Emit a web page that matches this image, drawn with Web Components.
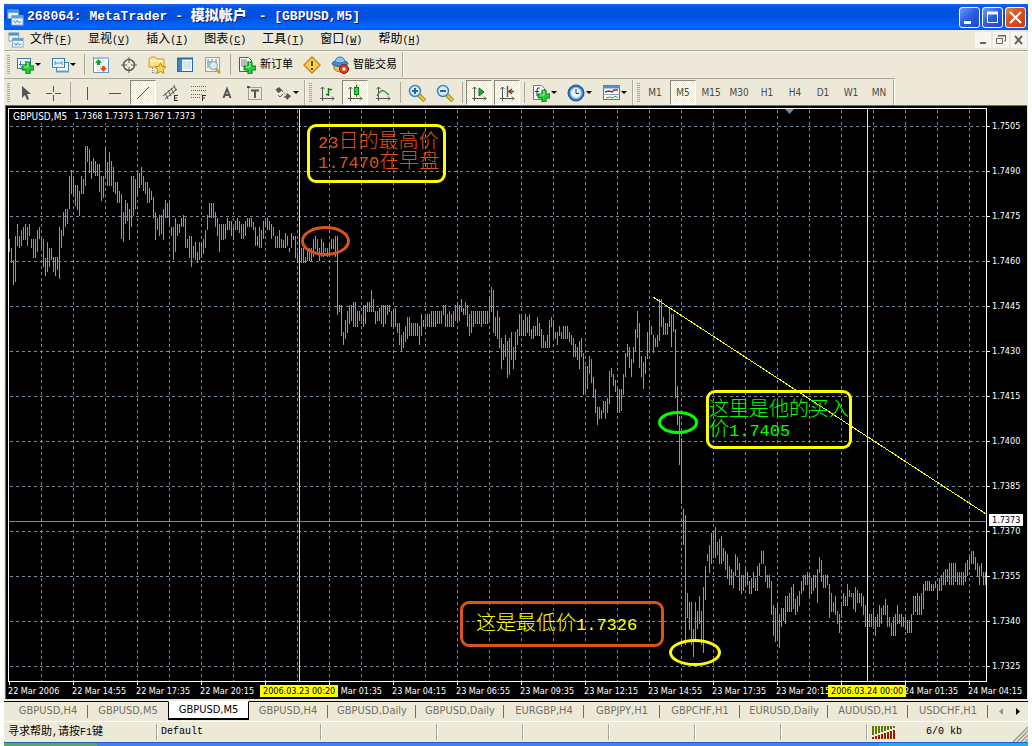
<!DOCTYPE html>
<html lang="zh-CN">
<head>
<meta charset="utf-8">
<title>268064: MetaTrader - 模拟帐户 - [GBPUSD,M5]</title>
<style>
  html, body { margin: 0; background: #fff; }
  body { font-family: "DejaVu Sans Condensed", "Noto Sans CJK SC", sans-serif; }
</style>
</head>
<body>
<mt-app></mt-app>
<script>
const CJK = '"Liberation Mono", "Noto Sans CJK SC", monospace';

const plus = (x, y) => `<path d="M${x + 4} ${y}h4v4h4v4h-4v4h-4v-4h-4v-4h4z" fill="#1fd13a" stroke="#067a14"/><path d="M${x + 5} ${y + 1}h1v4h-4" fill="none" stroke="#9df5a6"/>`;
const axes = '<path d="M4.500 17V3M2.500 5l2-2 2 2M2 14.500h14M14 12.500l2 2-2 2" fill="none" stroke="#555"/>';
const lens = sign => `<path d="M11 11l6 6" stroke="#a67c12" stroke-width="4"/><path d="M11 11l6 6" stroke="#f2cf4a" stroke-width="2"/><circle cx="7" cy="7" r="5.500" fill="#d5ecfb" stroke="#3c88bd" stroke-width="1.500"/><path d="${sign}" stroke="#1c69a5" stroke-width="2"/>`;

const ICONS = {
  app: '<rect x="1" y="1" width="11" height="9" fill="#eaf3fb" stroke="#7fa9cc"/><rect x="1" y="1" width="11" height="3" fill="#4d94cc"/><rect x="5" y="7" width="12" height="10" fill="#f6faff" stroke="#7fa9cc"/><rect x="5" y="7" width="12" height="3" fill="#5ba1d6"/><path d="M7 12l2 3 2-3 2 3 2-2" fill="none" stroke="#3978ad"/>',
  newchart: '<rect x="1.500" y="2.500" width="13" height="10" fill="#eef6fd" stroke="#3f7cae"/><path d="M4.500 5v5M3 8.500h9M9.500 5v2" stroke="#4c88b8" fill="none"/>' + plus(6, 6),
  profiles: '<rect x="5.500" y="6.500" width="12" height="9" fill="#fff" stroke="#3f7cae"/><path d="M5 14.500h13v2H5z" fill="#5f9dcd"/><rect x="1.500" y="2.500" width="12" height="9" fill="#e9f4fd" stroke="#3f7cae"/><path d="M4 5v4M4 7h7M11 5v4M1 11.500h13" stroke="#5792c2" fill="none"/>',
  market: '<rect x="1.500" y="1.500" width="15" height="15" fill="#fff" stroke="#5b9ad0"/><path d="M2 2h15" stroke="#94c3ea" stroke-width="2"/><path d="M4 5h9M4 8h9M4 11h9M4 14h9" stroke="#ccd6e0"/><path d="M3 7l3.500-4L10 7H8v2H5V7z" fill="#16a52e"/><path d="M8 12l3.500 4 3.500-4h-2v-2h-3v2z" fill="#e05022"/>',
  target: '<circle cx="9" cy="9" r="5.500" fill="none" stroke="#5d5d5d" stroke-width="1.500"/><path d="M9 1v6M9 11v6M1 9h6M11 9h6" stroke="#5d5d5d"/>',
  favorites: '<path d="M1 3l2-2h4l2 2h7v8H1z" fill="#fbe084" stroke="#c99a21"/><path d="M2 5h13" stroke="#fff3bf" stroke-width="2"/><path d="M4.500 12v5h5" stroke="#777" fill="none" stroke-dasharray="1 1"/><path d="M12.500 7l1.700 3.500 3.800.5-2.800 2.500.7 3.800-3.400-1.800-3.400 1.800.7-3.800L7 11l3.800-.5z" fill="#ffd75c" stroke="#bb8516"/>',
  navigator: '<rect x="1.500" y="2.500" width="15" height="13" fill="#f2f9ff" stroke="#2669a5"/><rect x="2" y="3" width="4" height="12" fill="#3a86c8"/><path d="M1 2.500h16" stroke="#2669a5" stroke-width="2"/><path d="M7 6h8M7 8h8M7 10h8M7 12h8" stroke="#b6d4ed"/>',
  tester: '<rect x="1.500" y="1.500" width="14" height="14" fill="#f4f4ef" stroke="#a09f95"/><path d="M4 3v9M8 3v4M12 3v6M4 6h3" stroke="#68889d"/><path d="M12 13l4 4" stroke="#d1a72b" stroke-width="3"/><circle cx="9.500" cy="9.500" r="4" fill="#d6edfa" stroke="#8099a8"/>',
  order: '<path d="M1.500 1.500h9l3 3v11h-12z" fill="#fff" stroke="#555"/><path d="M3 4h6M3 6h8M3 8h8M3 10h5" stroke="#777"/>' + plus(6, 6),
  warn: '<path d="M9 1l8 8-8 8-8-8z" fill="#ffd34d" stroke="#c18b1d" stroke-width="1.500"/><path d="M9 5v5M9 12v2" stroke="#6e3c05" stroke-width="2"/>',
  expert: '<path d="M3 9h12v4q-6 6-12 0z" fill="#f1c443" stroke="#a87818"/><ellipse cx="9" cy="7.500" rx="8" ry="3" fill="#418cc8" stroke="#27659a"/><path d="M4 6q1-5 5-5t5 5q-5 2-10 0z" fill="#8fc8ee" stroke="#3378ae"/><circle cx="13" cy="13" r="4.500" fill="#d83b1d" stroke="#8e1d0a"/><rect x="11.500" y="11.500" width="3" height="3" fill="#fff"/>',
  pointer: '<path d="M6 2v12l3-3 2 5 2-1-2-5h4z" fill="#555"/>',
  cross: '<path d="M9.500 2v6M9.500 11v6M2 9.500h6M11 9.500h6" stroke="#555"/>',
  vline: '<path d="M9.500 3v13" stroke="#555"/>',
  hline: '<path d="M3 9.500h12" stroke="#555"/>',
  trend: '<path d="M3 15L15 3" stroke="#555"/>',
  channel: '<path d="M1 12L13 2M3 15L15 5M3 9l3 6M6 6l3 6M9 4l3 6M12 1l2 6" stroke="#555" fill="none"/><path d="M12 11.500h4M12 14h3M12 16.500h4M12.500 11v6" stroke="#333" fill="none"/>',
  fibo: '<path d="M1 2.500h15M1 6.500h15M1 10.500h11M1 13.500h9" stroke="#666" stroke-dasharray="1 1"/><path d="M12.500 17v-6M12 11.500h4M12 14h3" stroke="#333" fill="none"/>',
  text: '<path d="M5.500 14L9 5l3.500 9M6.500 11h5" fill="none" stroke="#555" stroke-width="2"/>',
  label: '<rect x="2.500" y="3.500" width="13" height="12" fill="none" stroke="#555" stroke-dasharray="1 1"/><path d="M5 6.500h8M9 6v8" stroke="#555" stroke-width="2"/><path d="M1 2h3v2H1z" fill="#555"/>',
  arrows: '<path d="M5 3l4 4H7l-2 2-3-2 1-1H1z" fill="#555"/><path d="M8 7l5 5" stroke="#888" stroke-dasharray="2 1"/><path d="M13 9l4 3-4 4-1-2-3-1 3-1z" fill="#555"/><path d="M4 11l2 2 3-3" stroke="#555" fill="none"/>',
  bars: axes + '<path d="M10.500 4v8M8 10.500h2M11 5.500h3" stroke="#087f1a" stroke-width="1.500" fill="none"/>',
  candle: axes + '<path d="M10.500 1v12" stroke="#087f1a"/><rect x="8.500" y="3.500" width="4" height="7" fill="#27d741" stroke="#087f1a"/>',
  line: axes + '<path d="M3 12q4-7 7-5t5 4" stroke="#25a038" fill="none" stroke-width="1.500"/>',
  zoomin: lens('M4 7h6M7 4v6'),
  zoomout: lens('M4 7h6'),
  scroll: axes + '<path d="M9 4l5 4-5 4z" fill="#16a52e" stroke="#087f1a"/>',
  shift: axes + '<path d="M9.500 2v11" stroke="#1c69a5" stroke-width="1.500"/><path d="M11 7.500h5M14 5l-3 2.500L14 10" stroke="#a52a12" fill="none" stroke-width="1.500"/>',
  indicators: '<path d="M1.500 1.500h8l3 3v11h-11z" fill="#fff" stroke="#777"/><path d="M8 4q-3-1-3 2v6M3 7.500h4" stroke="#333" fill="none"/>' + plus(6, 6),
  clock: '<circle cx="9" cy="9" r="8" fill="#2c7ccc" stroke="#17549b"/><circle cx="9" cy="9" r="5.500" fill="#e9f3fb" stroke="#8db9de"/><path d="M9 5v4.500h3" fill="none" stroke="#333"/>',
  template: '<rect x="1.500" y="1.500" width="16" height="14" fill="#fff" stroke="#3f7cae"/><path d="M1 3h17" stroke="#4d94cc" stroke-width="3"/><path d="M1 10.500h17" stroke="#7fa9cc"/><path d="M3 8l4-1 3 1 2-2h4" stroke="#a52a12" fill="none" stroke-width="1.500"/><path d="M4 14l4-1 3 1 2-2 3 2" stroke="#25a038" fill="none"/>'
};

function define(name, template, setup) {
  const t = document.createElement('template');
  t.innerHTML = template;
  customElements.define(name, class extends HTMLElement {
    constructor() {
      super();
      this.attachShadow({ mode: 'open' }).append(t.content.cloneNode(true));
    }
    connectedCallback() { if (setup) setup(this, this.shadowRoot); }
  });
}

define('mt-icon', `<style>:host{display:block;width:18px;height:18px;flex:none}svg{display:block;width:100%;height:100%}</style>
<svg viewBox="0 0 18 18" aria-hidden="true"></svg>`, (el, root) => {
  root.querySelector('svg').innerHTML = ICONS[el.getAttribute('name')] || '';
});

define('tool-button', `<style>
  :host{display:block;flex:none;padding:0 1px;height:25px}
  button{display:flex;align-items:center;justify-content:center;gap:3px;box-sizing:border-box;min-width:26px;height:25px;padding:0;border:1px solid transparent;background:none;color:#000;font:11px/14px ${CJK};white-space:nowrap}
  :host([drop]) button{width:33px;gap:1px}
  :host([wide]) button{padding:0 3px;gap:4px}
  :host([period]) button{font:10px/14px "DejaVu Sans Condensed",sans-serif;color:#4a4a4a}
  :host([pressed]) button{border-color:#8b897c #fff #fff #8b897c;background:repeating-conic-gradient(#fff 0 25%,#ece9d8 0 50%) 0 0/2px 2px}
  i{display:none;border:3px solid transparent;border-top-color:#000;border-bottom:0}
  :host([drop]) i{display:block}
</style><button type="button"><slot></slot><i></i></button>`, (el, root) => {
  const b = root.querySelector('button');
  const name = el.getAttribute('icon');
  b.title = el.getAttribute('label') || '';
  if (name && !root.querySelector('mt-icon')) {
    const ic = document.createElement('mt-icon');
    ic.setAttribute('name', name);
    b.prepend(ic);
  }
});

define('tool-sep', `<style>:host{display:block;flex:none;width:1px;height:21px;margin:0 2px 0 3px;background:#aca899}</style>`);

define('tool-group', `<style>
  :host{display:flex;align-items:center;height:25px;border-right:1px solid #aca899;box-shadow:1px 0 #fff;padding-left:3px;margin-right:1px}
  .grip{width:3px;height:20px;margin-right:1px;background:repeating-linear-gradient(#aca899 0 1px,#ece9d8 1px 2px)}
</style><div class="grip"></div><slot></slot>`);

define('mt-title', `<style>
  :host{display:flex;align-items:center;height:26px;padding:0 2px 0 3px;color:#fff;background:linear-gradient(#1668ee 0,#0054e3 15%,#0050e0 55%,#0066ff 85%,#0058f0 100%)}
  h1{flex:1;margin:0 0 0 3px;font:bold 13px/20px ${CJK};white-space:nowrap;text-shadow:1px 1px #0a1883}
  b{font-size:14px;line-height:14px;padding-right:4px}
  mt-icon{width:17px;height:17px}
  button{width:21px;height:21px;margin-left:2px;padding:0;border:1px solid #fff;border-radius:3px;background:linear-gradient(135deg,#6f9cf5,#2a5bdd 50%,#1c49c8)}
  .x{background:linear-gradient(135deg,#c99a4b,#e0551f 35%,#c53b10)}
  svg{display:block;width:19px;height:19px}
</style>
<mt-icon name="app"></mt-icon><h1>268064: MetaTrader - <b>模拟帐户</b> - [GBPUSD,M5]</h1>
<button type="button" title="最小化"><svg viewBox="0 0 19 19"><path d="M4 13h7v3H4z" fill="#fff"/></svg></button>
<button type="button" title="最大化"><svg viewBox="0 0 19 19"><path d="M4.500 5h10v9.500h-10z" fill="none" stroke="#fff"/><path d="M4 5h11" stroke="#fff" stroke-width="3"/></svg></button>
<button type="button" class="x" title="关闭"><svg viewBox="0 0 19 19"><path d="M4 4l11 11M15 4L4 15" stroke="#fff" stroke-width="2"/></svg></button>`);

define('mt-menu', `<style>
  :host{display:flex;align-items:center;height:20px;padding:0 1px 0 4px;border-bottom:1px solid #aca899;box-shadow:0 1px #fff}
  nav{display:flex;flex:1;gap:16px;margin-left:6px}
  nav button{padding:0;border:0;background:none;color:#000;font:12px/18px ${CJK};white-space:nowrap}
  nav span{font-size:10px}
  mt-icon{width:16px;height:16px}
  .w{width:16px;height:16px;margin-left:2px;padding:0;border:0;background:#f6f5f0}
  svg{display:block;width:16px;height:16px}
</style>
<mt-icon name="app"></mt-icon>
<nav>
<button type="button">文件<span>(<u>F</u>)</span></button>
<button type="button">显视<span>(<u>V</u>)</span></button>
<button type="button">插入<span>(<u>I</u>)</span></button>
<button type="button">图表<span>(<u>C</u>)</span></button>
<button type="button">工具<span>(<u>T</u>)</span></button>
<button type="button">窗口<span>(<u>W</u>)</span></button>
<button type="button">帮助<span>(<u>H</u>)</span></button>
</nav>
<button class="w" type="button" title="最小化"><svg viewBox="0 0 16 16"><path d="M5 10h6v2H5z" fill="#6b695e"/></svg></button>
<button class="w" type="button" title="还原"><svg viewBox="0 0 16 16"><path d="M3.500 6.500h6v5h-6zM5 4.500V4h7.500v5H11" fill="none" stroke="#6b695e"/><path d="M3 6.500h7M5 3.500h8" stroke="#6b695e"/></svg></button>
<button class="w" type="button" title="关闭"><svg viewBox="0 0 16 16"><path d="M4 4l7 8M11 4l-7 8" stroke="#6b695e" stroke-width="2"/></svg></button>`);

define('mt-toolbars', `<style>
  :host{display:block}
  .row{display:flex;height:25px;padding:1px 0}
  .row + .row{border-top:1px solid #aca899;padding-bottom:0;width:fit-content}
</style>
<div class="row">
<tool-group>
  <tool-button drop icon="newchart" label="新图表"></tool-button><tool-button drop icon="profiles" label="配置"></tool-button>
  <tool-sep></tool-sep>
  <tool-button icon="market" label="市场报价"></tool-button><tool-button icon="target" label="数据窗口"></tool-button><tool-button icon="favorites" label="导航"></tool-button><tool-button icon="navigator" label="终端"></tool-button><tool-button icon="tester" label="测试"></tool-button>
  <tool-sep></tool-sep>
  <tool-button wide icon="order">新订单</tool-button><tool-button icon="warn" label="编辑器"></tool-button><tool-button wide icon="expert">智能交易</tool-button>
</tool-group>
</div>
<div class="row">
<tool-group>
  <tool-button icon="pointer" label="光标"></tool-button><tool-button icon="cross" label="十字线"></tool-button>
  <tool-sep></tool-sep>
  <tool-button icon="vline" label="垂直线"></tool-button><tool-button icon="hline" label="水平线"></tool-button><tool-button pressed icon="trend" label="趋势线"></tool-button><tool-button icon="channel" label="通道"></tool-button><tool-button icon="fibo" label="斐波那契"></tool-button><tool-button icon="text" label="文字"></tool-button><tool-button icon="label" label="标签"></tool-button><tool-button drop icon="arrows" label="箭头"></tool-button>
</tool-group>
<tool-group>
  <tool-button icon="bars" label="柱状图"></tool-button><tool-button pressed icon="candle" label="蜡烛图"></tool-button><tool-button icon="line" label="折线图"></tool-button>
  <tool-sep></tool-sep>
  <tool-button icon="zoomin" label="放大"></tool-button><tool-button icon="zoomout" label="缩小"></tool-button>
  <tool-sep></tool-sep>
  <tool-button pressed icon="scroll" label="自动滚动"></tool-button><tool-button pressed icon="shift" label="图表平移"></tool-button>
  <tool-sep></tool-sep>
  <tool-button drop icon="indicators" label="指标"></tool-button><tool-button drop icon="clock" label="周期"></tool-button><tool-button drop icon="template" label="模板"></tool-button>
</tool-group>
<tool-group>
  <tool-button period>M1</tool-button><tool-button period pressed>M5</tool-button><tool-button period>M15</tool-button><tool-button period>M30</tool-button><tool-button period>H1</tool-button><tool-button period>H4</tool-button><tool-button period>D1</tool-button><tool-button period>W1</tool-button><tool-button period>MN</tool-button>
</tool-group>
</div>`);

/* Bar series: high,low pairs, two pixels apart, in thirds of a pixel (one point = 9). */
const SERIES = [
 { x: 0, y: -4, d: '402,440 430,475 466,540 394,530 357,422 394,430 376,422 366,404 357,404 366,422 357,394 402,430 402,458 402,458 376,440 366,402 402,430 402,485 458,512 412,502 430,485 430,466 456,502 456,512 456,494 366,521 376,430 321,394 312,366 312,358 214,312 195,268 214,276 240,304 240,314 258,332 213,268 222,268 123,242 123,170 132,205 168,222 159,205 168,214 178,214 178,260 213,287 213,278 132,222 170,242 141,242 168,242 186,260 232,268 232,295 258,295 268,402 321,412 286,358 295,349 312,404 213,366 213,332 222,312 205,276 205,250 186,240 213,258 232,268 232,295 250,295 258,286 276,340 321,404 340,376 330,394 330,386 312,404 286,340 294,340 294,366 366,394 366,466 340,440 358,394 358,384 340,366 330,366 340,430 402,430 394,458 394,485 422,458 412,466 440,475 412,466 412,458 402,448 376,430 330,376 294,340 294,340 294,340 321,366 340,394 358,440 358,404 358,404 358,402 340,376 348,376 348,394 366,404 348,376 340,376 348,384 358,402 358,402 348,394 340,366 340,366 340,366 350,376 366,422 394,422 366,430 376,430 348,402 340,366 340,376 348,376 358,402 366,394 394,430 394,430 376,430 402,430 404,430 385,430 394,422 430,440 385,430 394,404 394,458 440,475' },
 { x: 292, y: 91, d: '145,190 145,190 172,190 154,182 145,182 145,184 118,172 108,148 118,165 145,182 118,172 127,172 145,156 145,172 136,160 118,146 118,146 108,172 108,345 315,335 315,408 396,434 360,416 333,398 315,372 315,362 306,380 306,380 333,380 333,362 352,372 315,380 315,372 306,335 306,335 270,335 297,335 333,372 333,362 324,362 315,372 315,380 315,372 315,345 315,335 333,380 333,380 324,380 369,398 369,434 405,453 396,443 378,425 351,416 351,408 369,408 369,408 369,408 369,408 378,434 342,408 360,380 351,380 342,380 342,380 333,380 333,380 333,380 333,372 333,372 333,372 315,345 315,380 342,380 333,380 342,380 333,380 315,362 306,362 315,362 297,335 324,345 306,345 315,380 342,408 333,398 333,380 333,372 333,372 333,372 333,380 333,372 333,372 333,372 288,362 261,335 270,398 351,408 333,416 351,443 414,507 432,480 405,470 423,534 414,525 396,480 441,507 396,480 387,434 342,408 342,408 360,408 342,408 351,398 342,408 387,416 378,416 378,408 351,408 369,408 387,443 405,443 423,443 405,443 360,443 351,380 360,416 396,416 396,434 378,408 396,416 378,416 378,416 378,416 396,425 405,434 414,470 432,470 441,480 423,507 414,470' },
 { x: 574, y: 161, d: '249,376 288,368 288,358 258,312 267,340 321,385 357,430 411,466 411,448 420,448 393,430 393,448 384,430 303,402 294,322 312,349 330,366 357,422 357,430 357,422 312,376 249,322 222,260 231,295 267,322 231,278 177,242 123,205 159,295 258,322 276,358 258,312 186,268 150,240 168,196 195,250 204,232 195,232 87,214 87,170 141,196 159,196 159,196 114,170 132,232 132,186 177,385 348,466 438,584 504,702' },
 { x: 674, y: 381, d: '57,166 75,464 309,384 336,420 336,464 417,500 336,450 363,418 318,402 363,464 291,490 228,330 192,213 165,248 129,222 120,205 111,204 156,195 147,222 138,222 174,213 183,240 192,266 228,285 237,285 246,294 192,258 201,240 219,302 255,312 255,302 237,285 246,285 273,312 264,312 246,294 264,302 228,302 219,258 183,222 183,222 228,276 255,294 255,294 273,375 345,438 354,456 345,447 372,474 354,411 354,393 318,402 318,366 309,366 291,366 282,357 327,375 318,366 304,348 273,312 255,303 255,285 246,285 255,320 264,312 255,303 255,294 237,339 201,248 210,276 255,294 255,294 255,285 282,384 309,366 336,366 318,375 363,402 372,429 345,384 309,348 318,348 282,348 300,321 309,321 309,357 291,366 300,339 309,339 309,348 318,375 345,411 372,411 372,411 372,411 363,411 381,438 372,411 345,411 354,402 345,375 327,375 345,411 381,411 399,438 381,438 372,438 345,402 372,402 372,411 381,411 381,420 390,429 390,429 372,429 318,375 318,366 309,375 318,375 309,375 282,357 273,303 273,303 273,303 282,303 282,303 273,294 282,330 264,303 255,303 246,285 237,285 237,276 219,285 219,285 219,285 219,276 246,285 246,285 246,285 246,285 219,276 210,258 201,240 183,222 183,222 201,240 219,258 228,285 219,258 246,285 246,285' }
];

define('mt-plot', `<style>
  :host{display:block;position:relative;overflow:hidden;border:1px solid #fff;color:#fff}
  svg{position:absolute;inset:0;width:100%;height:100%}
  p{position:relative;display:flex;gap:7px;margin:1px 0 0 4px;width:fit-content;background:#000;font-size:9px;line-height:13px;white-space:pre}
  p span{font-size:10px}
</style>
<svg>
  <g class="grid" stroke="#778899" stroke-dasharray="3 3" shape-rendering="crispEdges"></g>
  <path d="M0 412.500H2000" stroke="#778899" shape-rendering="crispEdges"/>
  <path class="bars" stroke="#0f0" fill="none" shape-rendering="crispEdges"/>
  <path d="M290.500 0V2000M858.500 0V2000" stroke="#ff0" shape-rendering="crispEdges"/>
  <path d="M776 0h9l-4.500 5z" fill="#778899"/>
  <path d="M644 188L977 405" stroke="#ff0" shape-rendering="crispEdges"/>
  <g fill="none" stroke-width="3">
    <ellipse cx="316.500" cy="132" rx="23" ry="13.500" stroke="#dc541a"/>
    <ellipse cx="669" cy="313.500" rx="18.500" ry="10" stroke="#0f0"/>
    <ellipse cx="686" cy="543.500" rx="24.500" ry="12" stroke="#ff0"/>
  </g>
</svg>
<p><span>GBPUSD,M5</span>1.7368 1.7373 1.7367 1.7373</p>
<slot></slot>`, (el, root) => {
  let g = '';
  for (let x = 32; x < 2000; x += 32) g += `<path d="M${x}.5 1V2000"/>`;
  for (let y = 17; y < 2000; y += 45) g += `<path d="M1 ${y}.5H2000"/>`;
  root.querySelector('.grid').innerHTML = g;
  let d = '';
  for (const s of SERIES) s.d.split(' ').forEach((pair, i) => {
    const [hi, lo] = pair.split(',').map(v => s.y + Math.round(v / 3));
    d += `M${s.x + 2 * i}.5 ${hi}V${lo}`;
  });
  root.querySelector('.bars').setAttribute('d', d);
});

define('mt-note', `<style>
  :host{position:absolute;box-sizing:border-box;border:3px solid var(--edge);border-radius:9px;color:var(--ink);font:17px/20px "Liberation Mono","Noto Sans CJK SC",monospace;white-space:nowrap}
  ::slotted(div){height:20px}
</style><slot></slot>`);

define('mt-chart', `<style>
  :host{display:grid;grid-template:minmax(0,1fr) 17px / minmax(0,1fr) 40px;margin:0 1px;padding:2px 0 0 2px;border-top:1px solid #716f64;border-left:1px solid #716f64;background:#000;color:#fff;font-size:9px;line-height:14px;overflow:hidden}
  .prices{position:relative;padding-top:11px;overflow:hidden}
  .prices div{height:45px;padding-left:5px;position:relative}
  .prices div::before{content:"";position:absolute;left:0;top:7px;width:3px;height:1px;background:#fff}
  .now{position:absolute;left:2px;top:406px;width:31px;padding-left:3px;line-height:12px;background:#fff;color:#000}
  .times{grid-column:1/3;position:relative;display:flex;overflow:hidden}
  .times > span{box-sizing:border-box;flex:none;width:64px;position:relative;white-space:nowrap;padding-top:2px}
  .times > span::before{content:"";position:absolute;left:1px;top:0;width:1px;height:3px;background:#fff}
  .times > .cut{padding-right:10px;text-align:right}
  .times b{position:absolute;top:3px;width:75px;padding-left:3px;font-weight:400;line-height:12px;background:#ff0;color:#000;white-space:nowrap}
  mt-note span{font-size:20px;font-weight:300}
  .n1{left:298px;top:15px;width:139px;height:59px;padding:6px 0 0 8px;--edge:#ff0;--ink:#dc541a}
  .n2{left:697px;top:281px;width:146px;height:59px;padding:8px 0 0 0;--edge:#ff0;--ink:#0f0}
  .n3{left:451px;top:492px;width:204px;height:46px;padding:11px 0 0 13px;--edge:#dc541a;--ink:#ff0}
</style>
<mt-plot>
  <mt-note class="n1"><div>23<span>日的最高价</span></div><div>1.7470<span>在早盘</span></div></mt-note>
  <mt-note class="n2"><div><span>这里是他的买入</span></div><div><span>价</span>1.7405</div></mt-note>
  <mt-note class="n3"><div><span>这是最低价</span>1.7326</div></mt-note>
</mt-plot>
<div class="prices"></div>
<div class="times"></div>`, (el, root) => {
  let p = '';
  for (let v = 17505; v >= 17325; v -= 15) p += `<div>${(v / 10000).toFixed(4)}</div>`;
  root.querySelector('.prices').innerHTML = p + '<span class="now">1.7373</span>';
  const t = ['22 Mar 2006', '22 Mar 14:55', '22 Mar 17:35', '22 Mar 20:15', '', 'Mar 01:35', '23 Mar 04:15', '23 Mar 06:55', '23 Mar 09:35', '23 Mar 12:15', '23 Mar 14:55', '23 Mar 17:35', '23 Mar 20:15', '', '24 Mar 01:35', '24 Mar 04:15'];
  root.querySelector('.times').innerHTML = t.map(s => `<span${s[0] === 'M' ? ' class="cut"' : ''}>${s}</span>`).join('') +
    '<b style="left:252px">2006.03.23 00:20</b><b style="left:820px">2006.03.24 00:00</b>';
});

define('mt-tabs', `<style>
  :host{display:flex;align-items:flex-start;height:19px;margin-top:2px;padding-left:4px;border-top:1px solid #000;border-bottom:1px solid #fff}
  button{box-sizing:border-box;width:80px;height:18px;flex:none;padding:0;border:0;background:linear-gradient(#716f64,#716f64) right 3px/1px 13px no-repeat;color:#716f64;font:11px/16px "DejaVu Sans Condensed",sans-serif;white-space:nowrap}
  .d{width:88px}
  .j{width:76px}
  .nosep{background:none}
  [aria-selected=true]{margin:-1px -1px 0 0;width:81px;height:19px;border:1px solid #000;border-top-color:#fff;border-bottom-width:2px;background:#fff;color:#000}
  .arrow{width:17px;background:none;margin-left:4px}
  .arrow + .arrow{margin-left:0}
  .arrow svg{display:block;margin:auto}
</style>
<button role="tab">GBPUSD,H4</button><button role="tab" class="nosep">GBPUSD,M5</button><button role="tab" aria-selected="true">GBPUSD,M5</button><button role="tab">GBPUSD,H4</button><button role="tab" class="d">GBPUSD,Daily</button><button role="tab" class="d">GBPUSD,Daily</button><button role="tab">EURGBP,H4</button><button role="tab" class="j">GBPJPY,H1</button><button role="tab">GBPCHF,H1</button><button role="tab" class="d">EURUSD,Daily</button><button role="tab">AUDUSD,H1</button><button role="tab">USDCHF,H1</button>
<button class="arrow" title="左"><svg width="4" height="7"><path d="M4 0v7L0 3.500z" fill="#999789"/></svg></button><button class="arrow" title="右"><svg width="4" height="7"><path d="M0 0v7l4-3.500z"/></svg></button>`);

define('mt-status', `<style>
  :host{display:flex;align-items:center;height:20px;color:#000;font:10px/16px ${CJK}}
  p{margin:0}
  div{box-sizing:border-box;flex:none;width:86px;height:16px;padding-left:4px;border-right:1px solid #aca899;box-shadow:1px 0 #fff;white-space:nowrap;display:flex;align-items:center}
  .a{width:153px}.a span{font-size:11px}.b{width:164px}.c{width:116px}
  .net{flex:1;border:0;box-shadow:none;padding:0}
  .net svg{margin:0 30px 0 5px}
  .size{width:16px;height:16px;flex:none;align-self:flex-end}
</style>
<div class="a"><p><span>寻求帮助</span>,<span>请按</span>F1<span>键</span></p></div><div class="b">Default</div><div class="c"></div><div></div><div></div><div></div><div></div><div></div>
<div class="net"><svg width="24" height="13" aria-hidden="true"></svg>6/0 kb</div>
<svg class="size" viewBox="0 0 16 16"><path d="M1 16L16 1M5 16L16 5M9 16l7-7M13 16l3-3" stroke="#9d9b8e" stroke-width="1.500"/></svg>`, (el, root) => {
  let s = '';
  for (let i = 0; i < 8; i++) s += `<rect x="${i * 3}" width="2" height="${9 - i}" fill="#5b7a00"/><rect x="${i * 3}" y="${11 - i}" width="2" height="${2 + i}" fill="#a01c00"/>`;
  root.querySelector('.net svg').innerHTML = s;
});

define('mt-taskbar', `<style>
  :host{display:flex;height:4px;border-top:1px solid #245edb;box-sizing:border-box}
  .start{width:93px;background:#5aa85a}.mid{flex:1;background:#3b83ee}.tray{width:149px;background:#19b0f2}
</style><div class="start"></div><div class="mid"></div><div class="tray"></div>`);

define('mt-app', `<style>
  :host{display:flex;flex-direction:column;box-sizing:border-box;min-height:100vh;padding:4px 4px 0;background:#fff}
  main{flex:1;display:flex;flex-direction:column;background:#ece9d8;overflow:hidden}
  mt-chart{flex:1 0 500px}
</style>
<mt-title></mt-title>
<main><mt-menu></mt-menu><mt-toolbars></mt-toolbars><mt-chart></mt-chart><mt-tabs></mt-tabs><mt-status></mt-status></main>
<mt-taskbar></mt-taskbar>`);
</script>
</body>
</html>
